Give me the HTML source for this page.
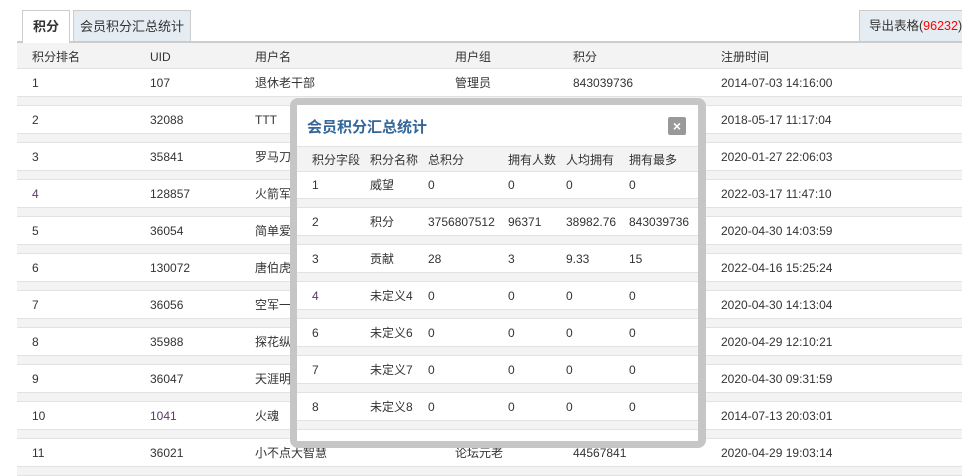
<!DOCTYPE html>
<html><head><meta charset="utf-8"><style>
*{margin:0;padding:0;box-sizing:border-box}
body{width:962px;height:459px;overflow:hidden;background:#fff;font:12px/14px "Liberation Sans","Noto Sans CJK SC",sans-serif;color:#333;position:relative}
.a{position:absolute;white-space:nowrap;line-height:14px;height:14px}
.tab{position:absolute;top:10px;height:32px;border:1px solid #ccc;border-bottom:none;line-height:31px;text-align:center;font-size:13px}
.band{position:absolute;left:17px;right:0;height:10px;background:#f3f3f3;border-top:1px solid #e2e2e2;border-bottom:1px solid #e2e2e2}
.mb{position:absolute;left:0;right:0;height:10px;background:#f3f3f3;border-top:1px solid #e2e2e2;border-bottom:1px solid #e2e2e2}
</style></head><body>
<div class="tab" style="left:22px;width:48px;background:#fff;font-weight:bold;height:33px;z-index:2">积分</div>
<div class="tab" style="left:73px;width:118px;background:#e5ecf2">会员积分汇总统计</div>
<div class="tab" style="left:859px;width:110px;background:#e5ecf2;text-align:left;padding-left:9px;font-size:12.5px;white-space:nowrap">导出表格(<span style="color:#f00">96232</span>)</div>
<div style="position:absolute;left:17px;right:0;top:41px;height:2px;background:#ccc"></div>
<div style="position:absolute;left:17px;right:0;top:43px;height:26px;background:#f3f3f3;border-bottom:1px solid #e2e2e2"></div>
<div class="a" style="top:50px;left:32px">积分排名</div><div class="a" style="top:50px;left:150px">UID</div><div class="a" style="top:50px;left:255px">用户名</div><div class="a" style="top:50px;left:455px">用户组</div><div class="a" style="top:50px;left:573px">积分</div><div class="a" style="top:50px;left:721px">注册时间</div>
<div id="rows"></div>
<script>
var d=[["1","107","退休老干部","管理员","843039736","2014-07-03 14:16:00"],["2","32088","TTT","","","2018-05-17 11:17:04"],["3","35841","罗马刀鋒","","","2020-01-27 22:06:03"],["4","128857","火箭军总","","","2022-03-17 11:47:10"],["5","36054","简单爱","","","2020-04-30 14:03:59"],["6","130072","唐伯虎点","","","2022-04-16 15:25:24"],["7","36056","空军一号","","","2020-04-30 14:13:04"],["8","35988","探花纵横","","","2020-04-29 12:10:21"],["9","36047","天涯明月","","","2020-04-30 09:31:59"],["10","1041","火魂","","","2014-07-13 20:03:01"],["11","36021","小不点大智慧","论坛元老","44567841","2020-04-29 19:03:14"]];
var x=[32,150,255,455,573,721],h="";
d.forEach(function(r,i){var t=76+37*i;r.forEach(function(c,j){if(c)h+='<div class="a" style="top:'+t+'px;left:'+x[j]+'px'+((i==3&&j==0)||(i==9&&j==1)?';color:#5a3a6a':'')+'">'+c+'</div>'});h+='<div class="band" style="top:'+(96+37*i)+'px"></div>'});
document.getElementById('rows').innerHTML=h;
</script>
<div style="position:absolute;left:290px;top:98px;width:416px;height:350px;background:#c6c6c6;border-radius:8px"></div>
<div style="position:absolute;left:297px;top:105px;width:401px;height:336px;background:#fff;overflow:hidden" id="m">
<div class="a" style="left:10px;top:14px;font-size:15px;line-height:17px;height:17px;font-weight:bold;color:#336699">会员积分汇总统计</div>
<div style="position:absolute;left:371px;top:12px;width:18px;height:18px;background:#999;border-radius:2px;color:#fff;font-weight:bold;text-align:center;line-height:18px;font-size:14px">×</div>
<div style="position:absolute;left:0;right:0;top:41px;height:26px;background:#f3f3f3;border-top:1px solid #e2e2e2;border-bottom:1px solid #e2e2e2"></div>
<div id="mr"></div>
</div>
<script>
var md=[["积分字段","积分名称","总积分","拥有人数","人均拥有","拥有最多"],["1","威望","0","0","0","0"],["2","积分","3756807512","96371","38982.76","843039736"],["3","贡献","28","3","9.33","15"],["4","未定义4","0","0","0","0"],["6","未定义6","0","0","0","0"],["7","未定义7","0","0","0","0"],["8","未定义8","0","0","0","0"]];
var mx=[15,73,131,211,269,332],g="";
md.forEach(function(r,i){var t=i==0?48:73+37*(i-1);r.forEach(function(c,j){g+='<div class="a" style="top:'+t+'px;left:'+mx[j]+'px'+(i==4&&j==0?';color:#5a3a6a':'')+'">'+c+'</div>'});if(i>0)g+='<div class="mb" style="top:'+(93+37*(i-1))+'px"></div>'});
document.getElementById('mr').innerHTML=g;
</script>
</body></html>
